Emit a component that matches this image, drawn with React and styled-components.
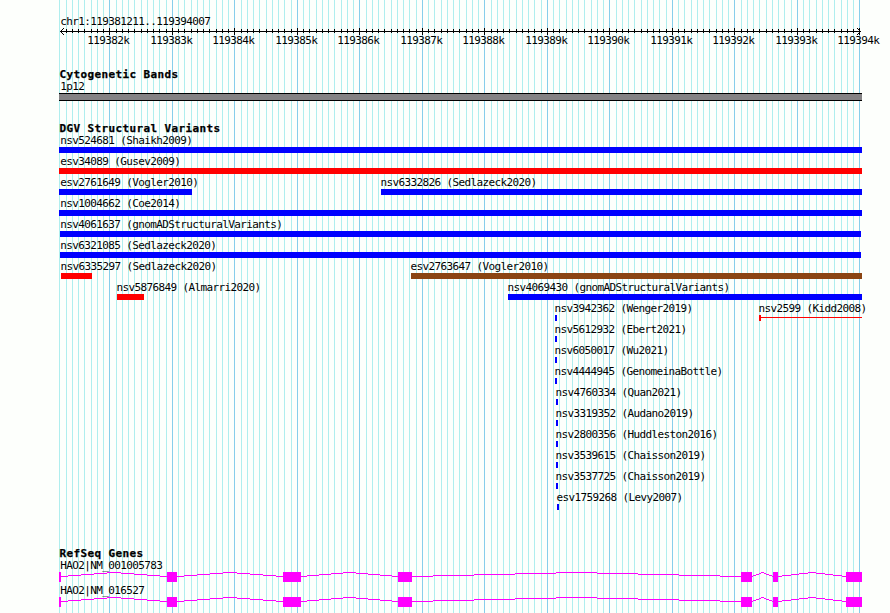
import React from "react";
import styled, { createGlobalStyle } from "styled-components";

const LEFT = 59;
const RIGHT = 862;

const BLUE = "#0000ff";
const RED = "#ff0000";
const BROWN = "#8b4513";

// one entry per row, features ordered from left to right
const variantRows = [
    [{ name: "nsv524681 (Shaikh2009)", start: 59, end: 862, color: BLUE }],
    [{ name: "esv34089 (Gusev2009)", start: 59, end: 862, color: RED }],
    [
        { name: "esv2761649 (Vogler2010)", start: 59, end: 192, color: BLUE },
        { name: "nsv6332826 (Sedlazeck2020)", start: 381, end: 862, color: BLUE },
    ],
    [{ name: "nsv1004662 (Coe2014)", start: 59, end: 862, color: BLUE }],
    [{ name: "nsv4061637 (gnomADStructuralVariants)", start: 60, end: 861, color: BLUE }],
    [{ name: "nsv6321085 (Sedlazeck2020)", start: 60, end: 861, color: BLUE }],
    [
        { name: "nsv6335297 (Sedlazeck2020)", start: 61, end: 92, color: RED },
        { name: "esv2763647 (Vogler2010)", start: 411, end: 862, color: BROWN },
    ],
    [
        { name: "nsv5876849 (Almarri2020)", start: 117, end: 144, color: RED },
        { name: "nsv4069430 (gnomADStructuralVariants)", start: 508, end: 862, color: BLUE },
    ],
    [
        { name: "nsv3942362 (Wenger2019)", start: 555, end: 557, color: BLUE },
        { name: "nsv2599 (Kidd2008)", start: 759, end: 862, color: RED, thin: true },
    ],
    [{ name: "nsv5612932 (Ebert2021)", start: 555, end: 557, color: BLUE }],
    [{ name: "nsv6050017 (Wu2021)", start: 555, end: 557, color: BLUE }],
    [{ name: "nsv4444945 (GenomeinaBottle)", start: 555, end: 557, color: BLUE }],
    [{ name: "nsv4760334 (Quan2021)", start: 556, end: 558, color: BLUE }],
    [{ name: "nsv3319352 (Audano2019)", start: 556, end: 558, color: BLUE }],
    [{ name: "nsv2800356 (Huddleston2016)", start: 556, end: 558, color: BLUE }],
    [{ name: "nsv3539615 (Chaisson2019)", start: 556, end: 558, color: BLUE }],
    [{ name: "nsv3537725 (Chaisson2019)", start: 556, end: 558, color: BLUE }],
    [{ name: "esv1759268 (Levy2007)", start: 557, end: 559, color: BLUE }],
];

const genes = ["HAO2|NM_001005783", "HAO2|NM_016527"];

const exons = [
    [59, 61],
    [167, 177],
    [283, 301],
    [398, 412],
    [741, 752],
    [773, 778],
    [846, 862],
];

// ten ticks per 1k, 6.25px apart
const ticks = Array.from({ length: 129 }, (_, i) => ({
    x: Math.round(59.5 + i * 6.25 - 0.01),
    major: i % 10 === 8,
    label: `${119382 + (i - 8) / 10}k`,
}));

// an intron rises 4px to its middle and falls back, in whole pixel steps
const intronPath = (from, to) => {
    const step = (to - from) / 8;
    let path = "";
    let x = from;
    [4, 3, 2, 1, 0, 1, 2, 3, 4].forEach((y, i) => {
        const next = i === 8 ? to : Math.round(from + (i + 0.5) * step);
        path += `M${x} ${y}H${next}V${y + 1}H${x}Z`;
        x = next;
    });
    return path;
};

const Grid = () => (
    <StGrid width="890" height="613" shapeRendering="crispEdges">
        {ticks.map((tick) => (
            <rect
                key={tick.x}
                x={tick.x}
                y="0"
                width="1"
                height="613"
                fill={tick.major ? "#87ceeb" : "#afeeee"}
            />
        ))}
    </StGrid>
);

const Ruler = () => (
    <StRuler width="890" height="22">
        <g shapeRendering="crispEdges">
            <rect x="60" y="4" width="801" height="1" />
            {ticks.slice(1).map((tick) => (
                <rect
                    key={tick.x}
                    x={tick.x}
                    y={tick.major ? 1 : 2}
                    width="1"
                    height={tick.major ? 7 : 4}
                />
            ))}
            {[1, 2, 3].map((d) => (
                <path
                    key={d}
                    d={`M${60 + d} ${4 - d}h1v1h-1zM${60 + d} ${4 + d}h1v1h-1zM${860 - d} ${4 - d}h1v1h-1zM${860 - d} ${4 + d}h1v1h-1z`}
                />
            ))}
        </g>
        {ticks
            .filter((tick) => tick.major)
            .map((tick) => (
                <text key={tick.x} x={tick.x - 21.7} y="17">
                    {tick.label}
                </text>
            ))}
    </StRuler>
);

const Variant = ({ feature, offset }) => (
    <StFeature style={{ marginLeft: offset, width: feature.end - feature.start }}>
        <StFeatureName $shift={Math.max(60.2, feature.start - 0.6) - feature.start}>
            {feature.name}
        </StFeatureName>
        {feature.thin ? (
            <StThinBar $color={feature.color} />
        ) : (
            <StBar $color={feature.color} />
        )}
    </StFeature>
);

const Gene = ({ name }) => (
    <StGene>
        <StLabel>{name}</StLabel>
        <StGeneModel viewBox="59 0 803 10" width="803" height="10" shapeRendering="crispEdges">
            {exons.slice(1).map(([start], i) => (
                <path key={start} d={intronPath(exons[i][1], start)} />
            ))}
            {exons.map(([start, end]) => (
                <rect key={start} x={start} y="0" width={end - start} height="10" />
            ))}
        </StGeneModel>
    </StGene>
);

const App = () => {
    return (
        <StBrowser>
            <GlobalStyle />
            <Grid />
            <StContent>
                <StRegion>chr1:119381211..119394007</StRegion>
                <Ruler />
                <StTrack $gap={21}>
                    <StTitle>Cytogenetic Bands</StTitle>
                    <StLabel>1p12</StLabel>
                    <StBand />
                </StTrack>
                <StTrack $gap={35}>
                    <StTitle>DGV Structural Variants</StTitle>
                    {variantRows.map((row) => (
                        <StRow key={row[0].name}>
                            {row.map((feature, i) => (
                                <Variant
                                    key={feature.name}
                                    feature={feature}
                                    offset={feature.start - (i ? row[i - 1].end : LEFT)}
                                />
                            ))}
                        </StRow>
                    ))}
                </StTrack>
                <StTrack $gap={0}>
                    <StTitle>RefSeq Genes</StTitle>
                    {genes.map((name) => (
                        <Gene key={name} name={name} />
                    ))}
                </StTrack>
            </StContent>
        </StBrowser>
    );
};

const GlobalStyle = createGlobalStyle`
    body {
        margin: 0;
        background-color: #fdfffc;
    }
`;

const StBrowser = styled.div`
    position: relative;
    width: 890px;
    height: 613px;
    overflow: hidden;
    color: #000;
    font-family: "DejaVu Sans Mono", monospace;
    font-size: 11px;
    line-height: 13px;
    letter-spacing: -0.622px;
    white-space: nowrap;
`;

const StGrid = styled.svg`
    position: absolute;
    top: 0;
    left: 0;
`;

const StContent = styled.div`
    position: relative;
    display: flex;
    flex-direction: column;
    padding-top: 15px;
`;

const StRegion = styled.div`
    height: 12px;
    padding-left: 60.2px;
`;

const StRuler = styled.svg`
    display: block;
    margin-bottom: 19px;
    overflow: visible;
`;

const StTrack = styled.section`
    width: ${RIGHT - LEFT}px;
    margin-left: ${LEFT}px;
    margin-bottom: ${({ $gap }) => $gap}px;
`;

const StTitle = styled.h2`
    height: 12px;
    margin: 0;
    padding-left: 0.4px;
    font-size: 11px;
    font-weight: 700;
    letter-spacing: 0.378px;
    -webkit-text-stroke: 0.25px #000;
`;

const StLabel = styled.div`
    height: 13px;
    padding-left: 1.2px;
`;

const StBand = styled.div`
    height: 6px;
    border-top: 1px solid #000;
    border-bottom: 1px solid #000;
    background-color: #848284;
`;

const StRow = styled.div`
    display: flex;
    height: 21px;
`;

const StFeature = styled.div`
    flex: none;
`;

const StFeatureName = styled.div`
    height: 13px;
    margin-left: ${({ $shift }) => $shift}px;
`;

const StBar = styled.div`
    height: 6px;
    background-color: ${({ $color }) => $color};
`;

const StThinBar = styled.div`
    height: 6px;
    border-left: 2px solid ${({ $color }) => $color};
    background: linear-gradient(${({ $color }) => $color}, ${({ $color }) => $color}) 0 2px / 100% 1px no-repeat;
`;

const StGene = styled.div`
    height: 25px;
`;

const StGeneModel = styled.svg`
    display: block;
    fill: #ff00ff;
`;

export default App;
